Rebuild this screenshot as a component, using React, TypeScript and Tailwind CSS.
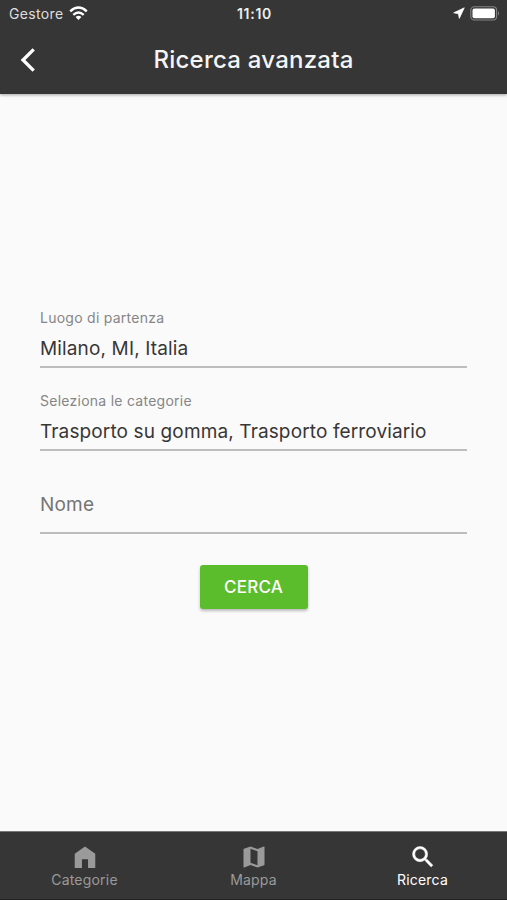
import type { ReactNode } from 'react';

function StatusBar() {
  return (
    <div className="grid h-7 grid-cols-3 items-center pr-[7px] pl-[9px]">
      <div className="flex items-center gap-[5px]">
        <span className="text-[14px] leading-7 tracking-[0.35px] text-[#dedede]">Gestore</span>
        <svg width="19" height="15" viewBox="0 0 19 15" fill="none" stroke="#fff" strokeWidth="2.4" className="-mt-0.5">
          <path d="M1.2 5.4Q9.5 -2.2 17.8 5.4" />
          <path d="M4.3 8.8Q9.5 4.2 14.7 8.8" />
          <path d="M9.5 14L6.6 11Q9.5 8.6 12.4 11Z" fill="#fff" stroke="none" />
        </svg>
      </div>
      <span className="text-center text-[14px] font-semibold leading-7 tracking-[0.7px] text-[#eee]">11:10</span>
      <div className="-mt-0.5 flex items-center justify-end gap-[5px]">
        <svg width="12" height="12" viewBox="0 0 12 12" fill="#fff" stroke="#fff" strokeWidth="0.7" strokeLinejoin="round">
          <path d="M11.3 0.8L0.7 5.8L5.4 6.8L6.3 11.4Z" />
        </svg>
        <svg width="30" height="15" viewBox="0 0 30 15">
          <rect x="0.8" y="0.8" width="25.8" height="13.2" rx="3.5" fill="none" stroke="#858585" strokeWidth="1.1" />
          <rect x="2.5" y="2.6" width="22.4" height="9.6" rx="1.8" fill="#fff" />
          <path d="M28 5Q30 7.4 28 9.8Z" fill="#858585" />
        </svg>
      </div>
    </div>
  );
}

function Field({ label, value }: { label: string; value: ReactNode }) {
  return (
    <div className="flex h-[83px] flex-col justify-end border-b-2 border-[#bdbdbd]">
      <span className="text-[14px] leading-5 tracking-[0.26px] text-[#868686]">{label}</span>
      <div className="mt-[7px] mb-[3px] text-[19px] leading-7 whitespace-nowrap text-[#373737]">{value}</div>
    </div>
  );
}

function Tab({ label, active, children }: { label: string; active?: boolean; children: ReactNode }) {
  return (
    <button className={`flex flex-1 flex-col items-center pt-[11px] ${active ? 'text-white' : 'text-[#9a9a9a]'}`}>
      <svg width="28" height="28" viewBox="0 0 24 24" fill="currentColor">{children}</svg>
      <span className="-mt-px text-[14px] leading-5 tracking-[0.2px]">{label}</span>
    </button>
  );
}

export default function App() {
  return (
    <div className="flex h-[900px] w-[507px] flex-col overflow-hidden bg-[#fafafa] font-['Inter','Liberation_Sans',sans-serif]">
      <header className="h-[94px] shrink-0 bg-[#363636] shadow-[0_1px_3px_rgba(0,0,0,0.35)]">
        <StatusBar />
        <div className="grid h-16 grid-cols-[60px_1fr_60px] items-center">
          <button aria-label="Indietro" className="pl-5">
            <svg width="16" height="24" viewBox="0 0 16 24" fill="none" stroke="#fff" strokeWidth="3.3">
              <path d="M13.7 1.3L3 12L13.7 22.7" />
            </svg>
          </button>
          <h1 className="text-center text-[24px] font-medium tracking-[0.23px] whitespace-nowrap text-[#f5f5f5]">Ricerca avanzata</h1>
        </div>
      </header>

      <main className="flex flex-1 flex-col px-10 pt-[191px]">
        <Field label="Luogo di partenza" value={<span className="tracking-[0.14px]">Milano, MI, Italia</span>} />
        <Field label="Seleziona le categorie" value={<span className="tracking-[0.13px]">Trasporto su gomma, Trasporto ferroviario</span>} />
        <div className="flex h-[83px] items-end border-b-2 border-[#bdbdbd] pb-[13px]">
          <span className="text-[19px] leading-7 tracking-[0.2px] text-[#757575]">Nome</span>
        </div>
        <button className="mt-[31px] h-11 w-[108px] self-center rounded-[3px] bg-[#5bbd2b] pt-px text-[17px] font-medium tracking-[0.2px] text-white shadow-[0_2px_3px_rgba(0,0,0,0.25)]">
          CERCA
        </button>
      </main>

      <nav className="flex h-[69px] shrink-0 border-t border-b border-t-[#777] border-b-[#222] bg-[#363636]">
        <Tab label="Categorie">
          <path d="M12 3L3.2 9.3V21.5H9.4V14H14.6V21.5H20.8V9.3Z" />
        </Tab>
        <Tab label="Mappa">
          <path d="M20.5 3l-.16.03L15 5.1 9 3 3.36 4.9c-.21.07-.36.25-.36.48V20.5c0 .28.22.5.5.5l.16-.03L9 18.9l6 2.1 5.64-1.9c.21-.07.36-.25.36-.48V3.5c0-.28-.22-.5-.5-.5zM15 19l-6-2.11V5l6 2.11V19z" />
        </Tab>
        <Tab label="Ricerca" active>
          <g stroke="currentColor" strokeWidth="0.4">
            <path d="M15.5 14h-.79l-.28-.27A6.471 6.471 0 0 0 16 9.5 6.5 6.5 0 1 0 9.5 16c1.61 0 3.09-.59 4.23-1.57l.27.28v.79l5 4.99L20.49 19l-4.99-5zm-6 0C7.01 14 5 11.99 5 9.5S7.01 5 9.5 5 14 7.01 14 9.5 11.99 14 9.5 14z" />
          </g>
        </Tab>
      </nav>
    </div>
  );
}
